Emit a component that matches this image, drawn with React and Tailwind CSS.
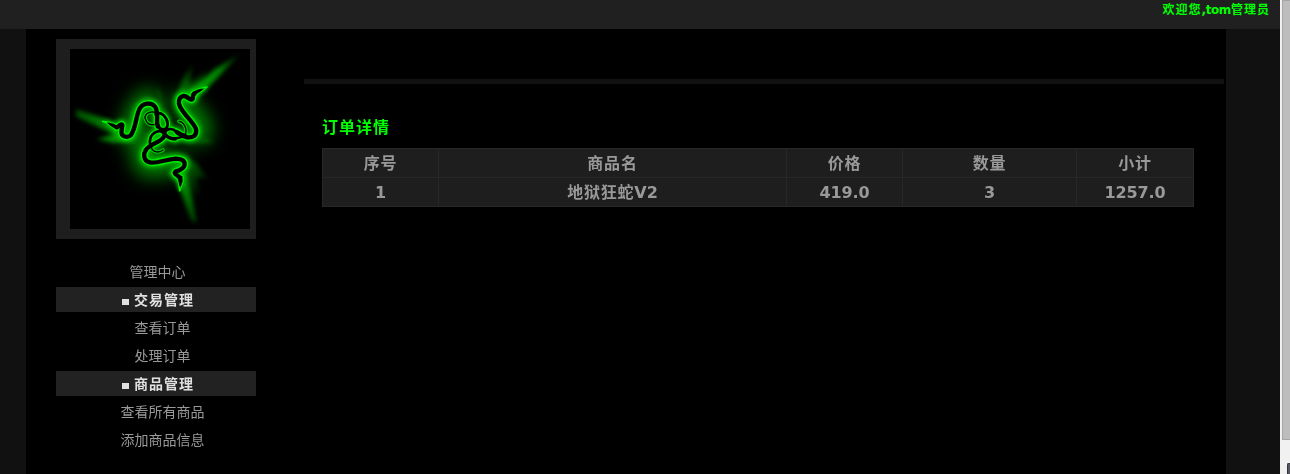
import React from 'react';

const menu = [
  { text: '管理中心', kind: 'root' },
  { text: '交易管理', kind: 'group' },
  { text: '查看订单', kind: 'link' },
  { text: '处理订单', kind: 'link' },
  { text: '商品管理', kind: 'group' },
  { text: '查看所有商品', kind: 'link' },
  { text: '添加商品信息', kind: 'link' },
];

const left = 'M200 280 C208 276 216 266 217 274 C216 284 212 294 216 302 C222 310 237 311 243 303 C258 280 257 252 267 228 C277 206 306 202 317 221 C326 239 318 263 323 277';
const right = 'M433 180 C424 182 434 195 424 197 C413 195 412 185 400 186 C385 190 384 205 390 218 C402 243 430 263 438 285 C442 304 429 312 412 310 C396 306 390 301 380 294';
const bottom = 'M390 432 C384 423 368 420 377 412 C390 409 401 405 404 392 C405 379 394 374 377 374 C348 376 330 387 303 386 C280 382 278 361 289 346 C302 328 331 326 341 309';
const knot = 'M317 240 C334 231 351 250 353 268 C354 283 343 290 331 283 C319 272 323 253 317 240 M380 294 C365 279 348 285 345 296 C349 313 376 318 398 307 M380 294 C389 299 397 303 407 304 M341 309 C346 297 334 287 318 294 C300 302 295 324 304 337 M323 277 C328 287 337 288 345 291 C339 303 355 316 377 316';
const tails = 'M317 235 C294 229 280 245 287 257 C291 269 302 273 312 272 M405 303 C413 286 403 264 387 262 M304 334 C302 350 322 361 339 348';
const heads = 'M205 282 L194 270 L168 264 L183 277 L196 284 Z M428 187 L428 173 L446 166 L467 161 L448 175 Z M382 423 L397 426 L398 442 L390 465 L385 440 Z';

function SnakeLogo() {
  return (
    <svg viewBox="60 45 540 540" className="block size-[180px] bg-black" fill="none" strokeLinecap="round" strokeLinejoin="round">
      <defs>
        <filter id="haze" x="-50%" y="-50%" width="200%" height="200%" colorInterpolationFilters="sRGB"><feGaussianBlur stdDeviation="25" /></filter>
        <filter id="beam" x="-50%" y="-50%" width="200%" height="200%" colorInterpolationFilters="sRGB"><feGaussianBlur stdDeviation="6" /></filter>
        <filter id="halo" x="-50%" y="-50%" width="200%" height="200%" colorInterpolationFilters="sRGB"><feGaussianBlur stdDeviation="6" /></filter>
        <linearGradient id="west" x1="78" x2="230" y1="0" y2="0" gradientUnits="userSpaceOnUse"><stop stopColor="#004900" /><stop offset="1" stopColor="#00a800" /></linearGradient>
        <linearGradient id="east" x1="400" y1="190" x2="565" y2="60" gradientUnits="userSpaceOnUse"><stop stopColor="#00b000" /><stop offset=".65" stopColor="#008000" /><stop offset="1" stopColor="#001800" /></linearGradient>
        <linearGradient id="eastFade" x1="390" y1="190" x2="430" y2="85" gradientUnits="userSpaceOnUse"><stop stopColor="#009000" /><stop offset="1" stopColor="#000" /></linearGradient>
        <linearGradient id="south" x1="385" y1="400" x2="435" y2="565" gradientUnits="userSpaceOnUse"><stop stopColor="#00b000" /><stop offset="1" stopColor="#003800" /></linearGradient>
        <linearGradient id="southFade" x1="400" y1="375" x2="480" y2="460" gradientUnits="userSpaceOnUse"><stop stopColor="#009000" /><stop offset="1" stopColor="#000" /></linearGradient>
      </defs>
      <g filter="url(#haze)" stroke="#007a00" strokeWidth="72">
        <path d="M240 295 C262 260 257 220 296 200 M400 210 C420 245 460 260 448 297 M375 385 L300 397 C270 385 275 350 295 330" />
      </g>
      <g filter="url(#beam)">
        <path fill="url(#west)" d="M78 226 L175 257 L225 295 L258 318 L190 326 L140 316 L193 300 L78 248 Z" />
        <path fill="url(#eastFade)" d="M375 205 L398 135 L432 78 L420 150 L490 85 L420 195 Z" />
        <path fill="url(#east)" d="M410 178 L495 105 L572 58 L466 169 L430 200 Z" />
        <path fill="url(#southFade)" opacity=".8" d="M400 365 L440 390 L474 435 L440 430 L465 545 L405 440 Z" />
        <path fill="url(#south)" d="M368 405 L402 500 L424 560 L440 566 L426 490 L405 405 Z" />
        <path fill="#006500" d="M360 308 L450 305 L492 324 L365 326 Z" />
        <path fill="#004900" d="M318 205 L322 158 L351 222 L350 255 Z" />
      </g>
      <g filter="url(#halo)" stroke="#00bd00" strokeWidth="31">
        <path d={left} /><path d={right} /><path d={bottom} />
        <path d={knot} strokeWidth="22" /><path d={heads} strokeWidth="9" />
      </g>
      <g stroke="#00e900">
        <path d={left} strokeWidth="21" /><path d={right} strokeWidth="21" /><path d={bottom} strokeWidth="21" />
        <path d={knot} strokeWidth="15" /><path d={heads} strokeWidth="6" />
        <path d={tails} strokeWidth="11" stroke="#00c800" />
      </g>
      <g stroke="#000">
        <path d={left} strokeWidth="13" /><path d={right} strokeWidth="13" /><path d={bottom} strokeWidth="13" />
        <path d={knot} strokeWidth="8" /><path d={tails} strokeWidth="4" />
        <path d={heads} fill="#000" stroke="none" />
      </g>
      <path d="M158 262 L170 265 M459 162 L471 159 M389 459 L389 470" stroke="#00f400" strokeWidth="5" />
    </svg>
  );
}

function MenuItem({ item }) {
  if (item.kind === 'group') {
    return (
      <li className="mb-[3px] flex h-[25px] items-center bg-[#222] pl-[66px] text-[14px] font-bold leading-[25px] tracking-[1px] text-[#e0e0e0]">
        <span className="mt-1 mr-[4px] block h-[6px] w-[7px] bg-[#e0e0e0]" />
        <span className="ml-px pt-[2px]">{item.text}</span>
      </li>
    );
  }
  return (
    <li className={`mb-[3px] h-[25px] pt-px text-center text-[14px] leading-[25px] text-[#999] ${item.kind === 'root' ? 'pl-[3px]' : 'pl-[13px]'}`}>
      {item.text}
    </li>
  );
}

function OrderTable() {
  const rows = [
    ['序号', '商品名', '价格', '数量', '小计'],
    ['1', '地狱狂蛇V2', '419.0', '3', '1257.0'],
  ];
  return (
    <table className="mt-[9px] h-[59px] w-[872px] table-fixed border-collapse bg-[#1e1e1e] text-center text-[16px] font-bold leading-[26px] text-[#999]">
      <colgroup>
        <col className="w-[116px]" /><col className="w-[348px]" /><col className="w-[116px]" /><col className="w-[174px]" /><col className="w-[117px]" />
      </colgroup>
      <tbody>
        {rows.map((row, r) => (
          <tr key={r} className="h-[29px]">
            {row.map((cell, c) => (
              <td key={c} className={`h-[29px] border border-[#272727] p-0 pt-[2px] ${/^[\d.]+$/.test(cell) ? 'tracking-[-0.1px]' : 'tracking-[0.8px]'}`}>
                {cell === '地狱狂蛇V2' ? <>地狱狂蛇<span className="tracking-normal">V2</span></> : cell}
              </td>
            ))}
          </tr>
        ))}
      </tbody>
    </table>
  );
}

export default function App() {
  return (
    <div className="flex h-[474px] w-[1290px] overflow-hidden bg-[#111] font-['DejaVu_Sans','Noto_Sans_CJK_SC',sans-serif]">
      <div className="flex w-[1280px] flex-col">
        <header className="flex h-[29px] shrink-0 justify-end bg-[#202020] pr-[10px] text-[12px] font-bold leading-[20px] text-[#0f0]">
          <span className="tracking-[1px]">欢迎您</span>
          <span className="tracking-[-0.4px]">,tom</span>
          <span className="tracking-[1px]">管理员</span>
        </header>
        <div className="ml-[26px] flex w-[1200px] flex-1 bg-black">
          <aside className="ml-[30px] mt-[10px] w-[200px] shrink-0">
            <div className="h-[200px] bg-[#1e1e1e] pl-[14px] pt-[10px]"><SnakeLogo /></div>
            <ul className="mt-[20px]">
              {menu.map((item) => <MenuItem key={item.text} item={item} />)}
            </ul>
          </aside>
          <main className="ml-[48px] mt-[50px] w-[920px]">
            <div className="h-[5px] bg-[#111]" />
            <section className="ml-[18px] mt-[31px]">
              <h1 className="h-[24px] text-[16px] font-bold leading-[26px] tracking-[1px] text-[#0f0]">订单详情</h1>
              <OrderTable />
            </section>
          </main>
        </div>
      </div>
      <div className="flex w-[10px] flex-col justify-between overflow-hidden bg-[#f1f1f1] pl-[2px]">
        <div className="h-[440px] border-y border-l border-[#a6a6a6] bg-[#bdbdbd]" />
        <div className="ml-[5px] h-[11px] rounded-tl-[2px] border-l border-t border-[#33343f] bg-[#555765]" />
      </div>
    </div>
  );
}
